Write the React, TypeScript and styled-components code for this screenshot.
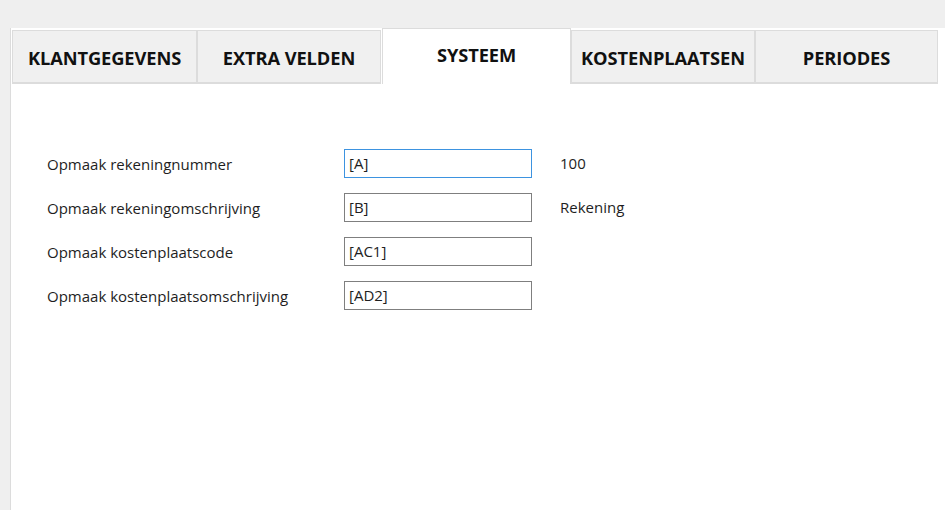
import React from "react";
import styled, { createGlobalStyle } from "styled-components";

const Global = createGlobalStyle`
  html, body { margin: 0; padding: 0; }
  body {
    background: #efefef;
    font-family: "Open Sans", "Noto Sans", sans-serif;
    color: #1a1a1a;
  }
`;

const Page = styled.div`
  width: 945px;
  height: 510px;
  box-sizing: border-box;
  padding: 28px 0 0 10px;
  overflow: hidden;
`;

const Panel = styled.div`
  height: 100%;
  background: #fff;
  border-left: 1px solid #dcdcdc;
  box-sizing: border-box;
  padding: 0 0 0 1px;
  display: flex;
  flex-direction: column;
`;

const TabStrip = styled.div`
  display: flex;
  align-items: flex-end;
  height: 56px;
`;

const Tab = styled.div<{ $active?: boolean; $w: number }>`
  box-sizing: border-box;
  width: ${(p) => p.$w}px;
  height: ${(p) => (p.$active ? 56 : 54)}px;
  display: flex;
  align-items: center;
  justify-content: center;
  font-weight: 700;
  font-size: 18.3px;
  letter-spacing: -0.1px;
  color: #111;
  white-space: nowrap;
  background: ${(p) => (p.$active ? "#fff" : "#f0f0f0")};
  border: 1px solid #dcdcdc;
  border-bottom: ${(p) => (p.$active ? "none" : "2px solid #dcdcdc")};
  padding-top: ${(p) => (p.$active ? 0 : 2)}px;
  padding-bottom: ${(p) => (p.$active ? 5 : 0)}px;
  margin-left: ${(p) => (p.$active ? 1 : 0)}px;
`;

const Content = styled.div`
  padding: 65px 0 0 35px;
  display: grid;
  grid-template-columns: 297px 188px auto;
  row-gap: 15px;
  align-items: center;
`;

const Label = styled.div`
  font-size: 15px;
  color: #1e1e1e;
`;

const Field = styled.div<{ $focus?: boolean }>`
  box-sizing: border-box;
  height: 29px;
  border: 1px solid ${(p) => (p.$focus ? "#3d93e0" : "#7f7f7f")};
  padding: 3px 0 0 4px;
  font-size: 15px;
  color: #1e1e1e;
`;

const Value = styled.div`
  font-size: 15px;
  color: #1e1e1e;
  margin: -2px 0 0 28px;
`;

const tabs = [
  { label: "KLANTGEGEVENS", w: 185 },
  { label: "EXTRA VELDEN", w: 184 },
  { label: "SYSTEEM", w: 189, active: true },
  { label: "KOSTENPLAATSEN", w: 184 },
  { label: "PERIODES", w: 183 },
];

const rows = [
  { label: "Opmaak rekeningnummer", value: "[A]", extra: "100", focus: true },
  { label: "Opmaak rekeningomschrijving", value: "[B]", extra: "Rekening" },
  { label: "Opmaak kostenplaatscode", value: "[AC1]", extra: "" },
  { label: "Opmaak kostenplaatsomschrijving", value: "[AD2]", extra: "" },
];

export default function App() {
  return (
    <>
      <Global />
      <Page>
        <Panel>
          <TabStrip>
            {tabs.map((t) => (
              <Tab key={t.label} $active={t.active} $w={t.w}>
                {t.label}
              </Tab>
            ))}
          </TabStrip>
          <Content>
            {rows.map((r) => (
              <React.Fragment key={r.label}>
                <Label>{r.label}</Label>
                <Field $focus={r.focus}>{r.value}</Field>
                <Value>{r.extra}</Value>
              </React.Fragment>
            ))}
          </Content>
        </Panel>
      </Page>
    </>
  );
}
